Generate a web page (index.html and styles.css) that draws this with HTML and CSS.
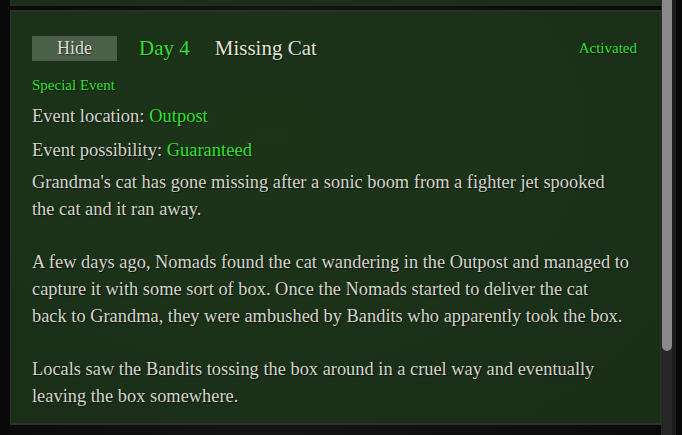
FILE: index.html
```html
<!DOCTYPE html>
<html>
<head>
<meta charset="utf-8">
<link rel="stylesheet" href="styles.css">
</head>
<body>
<div class="frame">
  <div class="list">
    <div class="panel-prev"></div>
    <div class="panel">
      <div class="head">
        <button class="hide-btn">Hide</button>
        <span class="day">Day 4</span>
        <span class="title">Missing Cat</span>
        <span class="status">Activated</span>
      </div>
      <div class="tag">Special Event</div>
      <div class="meta">Event location: <span class="green">Outpost</span></div>
      <div class="meta">Event possibility: <span class="green">Guaranteed</span></div>
      <div class="desc">
        <p class="para">Grandma's cat has gone missing after a sonic boom from a fighter jet spooked<br>the cat and it ran away.</p>
        <p class="para">A few days ago, Nomads found the cat wandering in the Outpost and managed to<br>capture it with some sort of box. Once the Nomads started to deliver the cat<br>back to Grandma, they were ambushed by Bandits who apparently took the box.</p>
        <p class="para">Locals saw the Bandits tossing the box around in a cruel way and eventually<br>leaving the box somewhere.</p>
      </div>
    </div>
  </div>
  <div class="scrollbar"><div class="thumb"></div></div>
  <div class="edge"></div>
</div>
</body>
</html>
```
FILE: styles.css
```css
html, body {
  margin: 0;
  padding: 0;
  background: #0c0c0c;
  overflow: hidden;
}
.frame {
  display: flex;
  width: 682px;
  height: 435px;
  font-family: "Liberation Serif", serif;
}
.list {
  flex: 1;
  padding-left: 10px;
  display: flex;
  flex-direction: column;
  gap: 4px;
  background: linear-gradient(90deg, #0a0a0a, #141414 40%, #0a0a0a);
}
.panel-prev {
  height: 6px;
  background: #1c3019;
  flex: none;
}
.panel {
  flex: none;
  height: 415px;
  box-sizing: border-box;
  border: 1px solid #2f2f2f;
  border-width: 2px 1px 2px 1px;
  background: radial-gradient(ellipse at 40% 30%, #1d3419 0%, #1b3018 60%, #1a2d17 100%);
  padding: 24px 4px 0 21px;
  color: #d3d3cc;
  text-shadow: 1px 1px 1px rgba(0,0,0,0.6);
}
.head {
  display: flex;
  align-items: center;
  height: 25px;
  margin-right: 19px;
}
.hide-btn {
  width: 85px;
  height: 25px;
  border: none;
  background: #4c5f49;
  color: #dcdcd6;
  font-family: inherit;
  font-size: 18px;
  padding: 0;
  text-shadow: 1px 1px 1px rgba(0,0,0,0.5);
}
.day {
  margin-left: 22px;
  color: #33e033;
  font-size: 21px;
}
.title {
  margin-left: 25px;
  color: #e2e2dc;
  font-size: 21px;
}
.status {
  margin-left: auto;
  color: #2ee02e;
  font-size: 15px;
}
.tag {
  margin-top: 14px;
  color: #2ee02e;
  font-size: 15px;
  line-height: 20px;
}
.meta {
  font-size: 18.5px;
  line-height: 22px;
  margin-top: 10px;
}
.meta + .meta {
  margin-top: 12px;
}
.green {
  color: #2ee02e;
}
.desc {
  margin-top: 8px;
  font-size: 18.4px;
  line-height: 26.7px;
  display: flex;
  flex-direction: column;
  gap: 26.7px;
  white-space: nowrap;
}
.para {
  margin: 0;
}
.scrollbar {
  width: 11px;
  flex: none;
  background: #262626;
}
.thumb {
  width: 10px;
  margin-left: 1px;
  height: 351px;
  background: #8a8a8a;
  border-radius: 0 0 5px 5px;
}
.edge {
  width: 10px;
  flex: none;
  background: linear-gradient(90deg, #1c1c1c 0 4px, #080808 4px);
}
```
